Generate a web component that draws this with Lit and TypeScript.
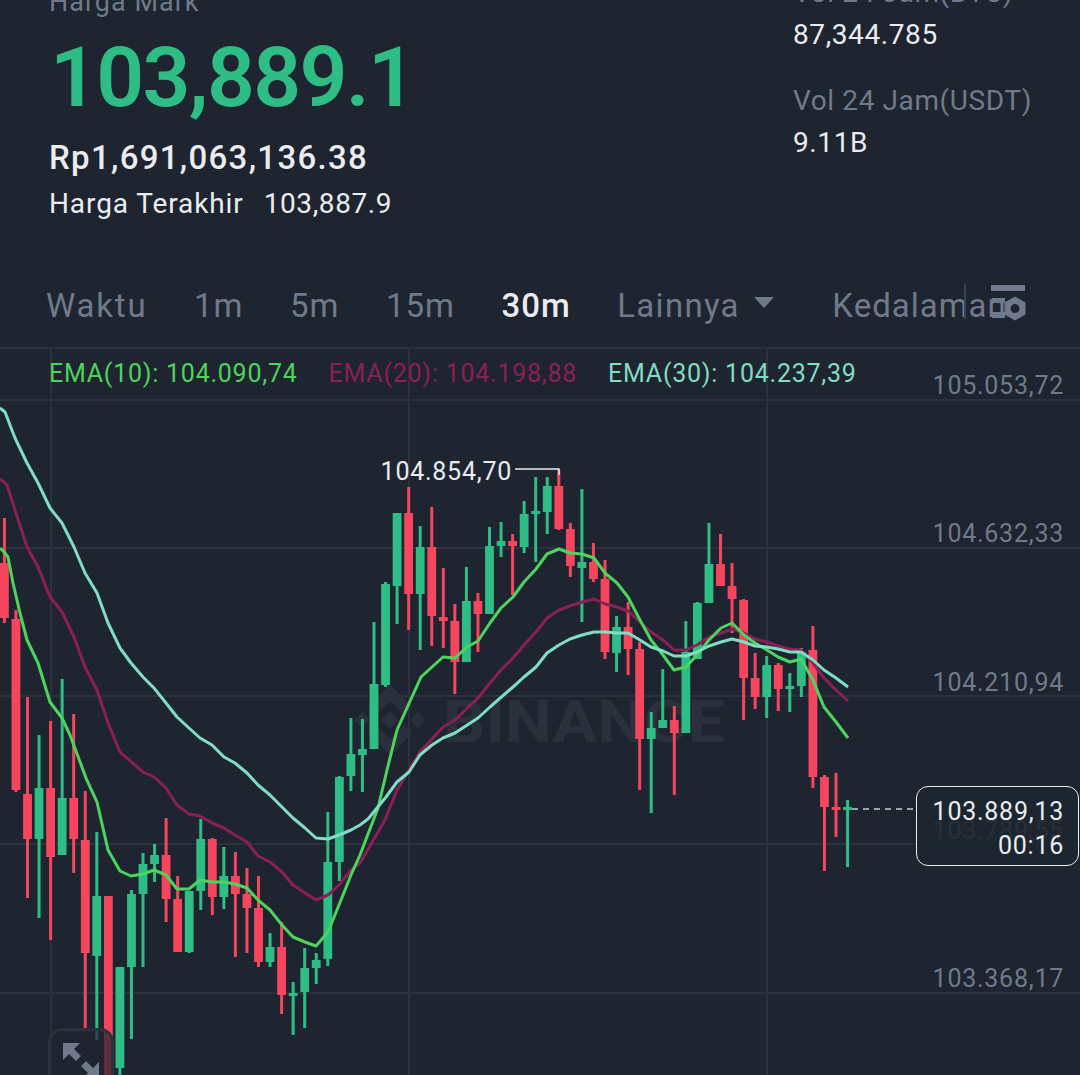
import { LitElement, css, html, svg } from "lit";
import { customElement } from "lit/decorators.js";

// [isGreen, wickTop, bodyTop, bodyBottom, wickBottom], one candle every 11.55px
const CANDLES: number[][] = [
  [0, 518, 563, 618, 623], [0, 610, 619, 790, 792], [0, 697, 794, 839, 898], [1, 735, 788, 839, 918],
  [0, 721, 788, 857, 940], [1, 679, 798, 855, 855], [0, 714, 798, 839, 873], [0, 791, 840, 953, 1030],
  [1, 832, 896, 956, 1040], [0, 896, 896, 1075, 1075], [1, 967, 967, 1068, 1075], [1, 890, 894, 967, 1039],
  [1, 853, 864, 894, 967], [1, 844, 855, 864, 882], [0, 818, 855, 899, 922], [0, 876, 899, 952, 952],
  [1, 891, 891, 952, 953], [1, 819, 839, 891, 910], [0, 838, 839, 897, 915], [1, 847, 876, 897, 909],
  [0, 852, 876, 894, 957], [0, 868, 894, 908, 953], [0, 876, 908, 962, 967], [1, 933, 947, 962, 967],
  [0, 922, 947, 995, 1014], [1, 982, 993, 996, 1035], [1, 948, 968, 992, 1028], [1, 953, 960, 968, 984],
  [1, 812, 862, 959, 966], [1, 776, 777, 862, 881], [1, 718, 754, 776, 791], [1, 719, 749, 755, 792],
  [1, 622, 684, 749, 749], [1, 582, 584, 685, 687], [1, 513, 513, 586, 624], [0, 487, 513, 594, 630],
  [1, 526, 547, 594, 650], [0, 507, 547, 616, 646], [0, 568, 617, 621, 648], [0, 604, 621, 662, 694],
  [1, 567, 601, 662, 662], [0, 593, 601, 614, 652], [1, 527, 546, 614, 614], [1, 522, 541, 546, 557],
  [0, 534, 541, 546, 595], [1, 501, 514, 547, 553], [1, 477, 511, 514, 562], [1, 477, 486, 512, 534],
  [0, 470, 486, 529, 530], [0, 523, 529, 566, 577], [1, 489, 562, 568, 622], [0, 543, 562, 579, 582],
  [0, 560, 579, 652, 659], [1, 616, 627, 653, 672], [0, 602, 627, 649, 675], [0, 642, 649, 739, 790],
  [1, 712, 728, 739, 813], [1, 669, 720, 728, 728], [0, 706, 720, 733, 795], [1, 621, 652, 733, 733],
  [1, 602, 603, 659, 659], [1, 523, 564, 603, 603], [0, 534, 564, 586, 586], [0, 563, 586, 599, 633],
  [0, 599, 600, 678, 720], [0, 653, 678, 697, 709], [1, 656, 665, 697, 718], [0, 663, 665, 689, 711],
  [1, 673, 686, 689, 712], [1, 648, 652, 686, 697], [0, 626, 650, 777, 788], [0, 775, 777, 807, 871],
  [0, 773, 807, 810, 837], [1, 800, 807, 810, 867],
];

const EMA10 =
  "0,548 4,552 8,557 13,583 20,613 27,640 38,663 50,702 62,718 70,735 86,778 97,802 108,850 120,871 131,876 143,874 154,870 166,875 177,889 189,889 200,880 212,882 224,882 235,884 247,888 258,900 270,910 282,925 293,937 305,942 316,946 328,932 339,905 351,875 360,855 378,808 387,770 397,730 421,677 443,657 455,658 467,647 478,641 490,623 501,608 513,597 524,582 536,569 547,554 559,549 570,553 582,554 594,558 605,573 617,583 628,597 640,620 651,640 663,655 674,670 686,667 697,655 709,640 721,628 732,623 744,635 755,643 767,650 778,657 790,662 801,659 813,680 824,707 836,722 848,738";
const EMA20 =
  "0,479 7,485 15,510 27,547 38,567 50,597 62,612 74,637 85,667 97,690 108,723 113,735 120,752 143,772 154,777 166,788 177,805 189,814 200,816 212,823 224,828 235,835 247,842 258,856 270,862 282,872 293,885 305,893 316,900 328,895 339,885 351,870 360,863 385,820 397,790 420,752 443,727 455,720 478,698 490,683 501,670 513,658 524,645 536,632 547,618 559,610 570,606 582,602 594,599 605,604 617,607 628,611 640,622 651,632 663,640 674,650 686,650 697,645 709,637 721,633 732,629 744,633 755,639 767,642 778,646 790,649 801,650 813,663 824,678 836,690 848,701";
const EMA30 =
  "0,408 5,412 15,438 27,463 38,483 50,508 62,523 74,547 85,573 97,593 108,623 120,648 131,663 143,677 154,688 166,703 177,717 189,728 200,738 212,745 224,757 235,763 247,773 258,785 270,795 282,807 293,818 305,828 316,838 328,839 339,835 351,830 360,825 368,819 386,797 397,782 409,772 420,755 432,745 443,738 455,733 478,718 490,707 513,687 524,677 536,667 547,653 559,645 570,639 582,635 594,632 605,632 617,633 628,633 640,640 651,647 663,651 674,656 686,656 697,652 709,646 721,642 732,639 744,642 755,646 767,647 778,649 790,652 801,652 813,660 824,670 836,678 848,687";

const AXIS: [string, number][] = [
  ["105.053,72", 394],
  ["104.632,33", 542],
  ["104.210,94", 691],
  ["103.789,55", 839],
  ["103.368,17", 987],
];

@customElement("app-root")
export class AppRoot extends LitElement {
  render() {
    return html`
      <div class="header">
        <div class="left">
          <div class="mark-label">Harga Mark<span class="mark-caret"></span></div>
          <div class="price">103,889.1</div>
          <div class="rupiah">Rp1,691,063,136.38</div>
          <div class="last">
            <span>Harga Terakhir</span>
            <span class="last-value">103,887.9</span>
          </div>
        </div>
        <div class="right">
          <div class="stat-label">Vol 24 Jam(BTC)</div>
          <div class="stat-value">87,344.785</div>
          <div class="stat-label second">Vol 24 Jam(USDT)</div>
          <div class="stat-value">9.11B</div>
        </div>
      </div>

      <div class="tabs">
        <span class="first">Waktu</span>
        <span>1m</span>
        <span>5m</span>
        <span>15m</span>
        <span class="active">30m</span>
        <span class="more">Lainnya<i class="caret"></i></span>
        <span class="depth">Kedalaman</span>
        <div class="settings">
          <svg width="66" height="44" viewBox="0 0 66 44" fill="#707a8a">
            <rect x="0" y="2" width="2" height="35" fill="#3b4350"></rect>
            <rect x="27" y="3" width="34" height="6"></rect>
            <rect x="28" y="16" width="13" height="5"></rect>
            <rect x="28" y="30" width="13" height="6"></rect>
            <path
              fill-rule="evenodd"
              d="M51 14.500l10.500 6v12l-10.500 6-10.500-6v-12zM51 22a4.500 4.500 0 1 0 0 9 4.500 4.500 0 0 0 0-9z"
            ></path>
          </svg>
        </div>
      </div>

      <div class="chart">
        ${this._renderCanvas()}
        <div class="legend">
          <span class="e10">EMA(10): 104.090,74</span>
          <span class="e20">EMA(20): 104.198,88</span>
          <span class="e30">EMA(30): 104.237,39</span>
        </div>
        <div class="tag">
          <span>103.889,13</span>
          <span>00:16</span>
        </div>
        <div class="fullscreen">
          <svg width="40" height="40" viewBox="0 0 40 40" fill="#707a8a">
            <path d="M1 1h17l-6 6 7 7-5 5-7-7-6 6z"></path>
            <path d="M37 37H20l6-6-7-7 5-5 7 7 6-6z"></path>
          </svg>
        </div>
      </div>
    `;
  }

  private _renderCanvas() {
    return html`
      <svg class="canvas" width="1080" height="726" viewBox="0 349 1080 726">
        ${[400, 548, 696, 844, 993].map(
          (y) => svg`<line x1="0" x2="1080" y1=${y} y2=${y} stroke="#2b323d" stroke-width="2"></line>`,
        )}
        ${[51, 409, 767].map(
          (x) => svg`<line x1=${x} x2=${x} y1="349" y2="1075" stroke="#2b323d" stroke-width="2"></line>`,
        )}
        <g fill="#2b313c">
          <path d="M390 685l22 22-8 8-14-14-14 14-8-8z"></path>
          <path d="M390 755l22-22-8-8-14 14-14-14-8 8z"></path>
          <path d="M390 711l9 9-9 9-9-9z"></path>
          <path d="M362 712l8 8-8 8-8-8z"></path>
          <path d="M418 712l8 8-8 8-8-8z"></path>
          <text
            x="443"
            y="742"
            font-size="59"
            font-weight="700"
            font-family="Roboto, sans-serif"
            textLength="282"
            lengthAdjust="spacingAndGlyphs"
          >BINANCE</text>
        </g>
        ${CANDLES.map((c, i) => {
          const x = 4.4 + 11.55 * i;
          const color = c[0] ? "#2ebd85" : "#f6465d";
          return svg`
            <rect x=${x - 1.5} y=${c[1]} width="3" height=${c[4] - c[1]} fill=${color}></rect>
            <rect x=${x - 4.4} y=${c[2]} width="8.8" height=${Math.max(c[3] - c[2], 3)} fill=${color}></rect>
          `;
        })}
        <polyline class="line" points=${EMA20} stroke="#8b1f58"></polyline>
        <polyline class="line" points=${EMA10} stroke="#4cd45c"></polyline>
        <polyline class="line" points=${EMA30} stroke="#80dcc4"></polyline>
        <path d="M515 469h44v6" fill="none" stroke="#eaecef" stroke-width="1.500"></path>
        <text class="high" x="512" y="480" text-anchor="end">104.854,70</text>
        <line x1="852" x2="916" y1="809" y2="809" stroke="#c9ccd1" stroke-width="1.500" stroke-dasharray="6 5"></line>
        ${AXIS.map(
          ([label, y]) => svg`<text class="axis" x="1064" y=${y} text-anchor="end">${label}</text>`,
        )}
      </svg>
    `;
  }

  static styles = css`
    :host {
      display: block;
      width: 1080px;
      height: 1075px;
      overflow: hidden;
      background: #1e2530;
      color: #eaecef;
      font-family: Roboto, "Liberation Sans", sans-serif;
    }

    .header {
      display: flex;
      justify-content: space-between;
      height: 293px;
      margin-top: -15px;
      padding-left: 49px;
      box-sizing: border-box;
    }

    .mark-label {
      height: 30px;
      font-size: 27px;
      line-height: 30px;
      letter-spacing: 1px;
      color: #707a8a;
    }

    .mark-caret {
      display: inline-block;
      width: 8px;
      height: 4px;
      margin: 0 0 22px 36px;
      background: #707a8a;
    }

    .price {
      margin: 21px 0 0 1px;
      font-size: 84px;
      line-height: 84px;
      font-weight: 600;
      letter-spacing: -1.700px;
      color: #2ebd85;
    }

    .rupiah {
      margin-top: 18px;
      font-size: 33px;
      line-height: 40px;
      font-weight: 500;
      letter-spacing: 1.300px;
    }

    .last {
      display: flex;
      gap: 20px;
      margin-top: 8px;
      font-size: 28px;
      line-height: 36px;
      letter-spacing: 0.900px;
    }

    .last-value {
      letter-spacing: 0.600px;
    }

    .right {
      width: 287px;
      margin-top: -10px;
      font-size: 28px;
      line-height: 36px;
      letter-spacing: 0.600px;
    }

    .stat-label {
      color: #707a8a;
    }

    .stat-label.second {
      margin-top: 30px;
    }

    .stat-value {
      margin-top: 6px;
    }

    .tabs {
      position: relative;
      display: flex;
      align-items: center;
      gap: 46.500px;
      height: 54px;
      margin-bottom: 15px;
      padding-left: 46px;
      font-size: 33px;
      letter-spacing: 1px;
      white-space: nowrap;
      overflow: hidden;
      color: #707a8a;
    }

    .tabs .first {
      letter-spacing: 1.800px;
    }

    .tabs .active {
      font-weight: 500;
      color: #eaecef;
    }

    .more {
      display: flex;
      align-items: center;
      letter-spacing: 1.300px;
    }

    .caret {
      width: 0;
      height: 0;
      margin: 0 0 6px 14px;
      border-left: 10px solid transparent;
      border-right: 10px solid transparent;
      border-top: 11px solid #707a8a;
    }

    .depth {
      margin-left: 12px;
    }

    .settings {
      position: absolute;
      top: 4px;
      left: 964px;
      display: flex;
    }

    .chart {
      position: relative;
      height: 728px;
      border-top: 2px solid #2b323d;
      box-sizing: border-box;
    }

    .canvas {
      display: block;
    }

    .line {
      fill: none;
      stroke-width: 3;
      stroke-linejoin: round;
    }

    .high,
    .axis {
      font-size: 25px;
      letter-spacing: 0.750px;
    }

    .high {
      fill: #eaecef;
    }

    .axis {
      fill: #707a8a;
    }

    .legend {
      position: absolute;
      top: 9px;
      left: 49px;
      display: flex;
      gap: 31px;
      font-size: 25px;
      line-height: 32px;
      letter-spacing: 0.760px;
      white-space: nowrap;
    }

    .e10 {
      color: #4cd45c;
    }

    .e20 {
      color: #8b1f58;
    }

    .e30 {
      color: #80dcc4;
    }

    .tag {
      position: absolute;
      top: 437px;
      left: 916px;
      display: flex;
      flex-direction: column;
      align-items: flex-end;
      justify-content: center;
      gap: 2px;
      width: 163px;
      height: 80px;
      padding: 6px 14px 0 0;
      box-sizing: border-box;
      border: 1.500px solid #eaecef;
      border-radius: 12px;
      background: rgba(30, 37, 48, 0.88);
      font-size: 25px;
      line-height: 32px;
      letter-spacing: 0.750px;
    }

    .fullscreen {
      position: absolute;
      top: 679px;
      left: 48px;
      width: 66px;
      height: 66px;
      padding: 11px 0 0 11px;
      box-sizing: border-box;
      border: 3px solid #2b323d;
      border-radius: 14px;
      background: rgba(30, 37, 48, 0.7);
    }
  `;
}
